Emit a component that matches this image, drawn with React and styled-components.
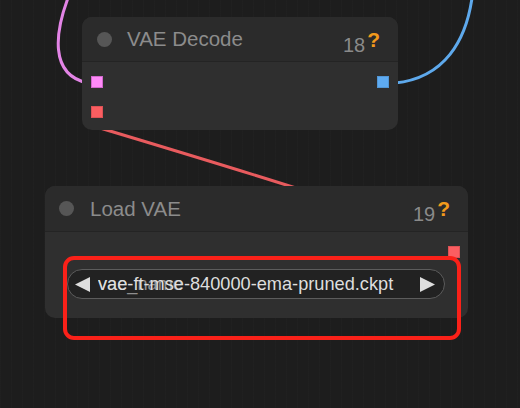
import React from "react";
import styled, { createGlobalStyle } from "styled-components";

const Global = createGlobalStyle`
  html, body { margin: 0; padding: 0; background: #1d1d1d; }
  body { font-family: "Liberation Sans", Arial, sans-serif; }
`;

const Canvas = styled.div`
  position: relative;
  width: 520px;
  height: 408px;
  overflow: hidden;
  background-color: #1d1d1d;
  background-image: repeating-linear-gradient(
    90deg,
    rgba(255, 255, 255, 0.012) 0 1px,
    transparent 1px 11px
  );
`;

const Wires = styled.svg`
  position: absolute;
  inset: 0;
  width: 520px;
  height: 408px;
`;

const Node = styled.div`
  position: absolute;
  left: ${(p) => p.$x}px;
  top: ${(p) => p.$y}px;
  width: ${(p) => p.$w}px;
  height: ${(p) => p.$h}px;
  background: #2f2f2f;
  border-radius: 10px;
  display: flex;
  flex-direction: column;
  overflow: hidden;
  box-sizing: border-box;
`;

const TitleBar = styled.div`
  height: ${(p) => p.$h}px;
  flex: none;
  background: #2b2b2b;
  border-bottom: 1px solid #242424;
  display: flex;
  align-items: center;
  padding: 0 18px 0 ${(p) => p.$pl}px;
  gap: ${(p) => p.$gap}px;
  box-sizing: border-box;
`;

const Dot = styled.span`
  width: 15px;
  height: 15px;
  border-radius: 50%;
  background: #565656;
  flex: none;
`;

const Title = styled.span`
  flex: 1;
  font-size: 20.5px;
  color: #8c8c8c;
  white-space: nowrap;
`;

const Badge = styled.span`
  display: flex;
  align-items: flex-end;
  gap: 2px;
  font-size: 20px;
  color: #8a8a8a;
  margin-top: 6px;
`;

const Help = styled.span`
  font-weight: bold;
  font-size: 21px;
  color: #f29a1c;
  padding-bottom: 5px;
`;

const Body = styled.div`
  flex: 1;
  display: flex;
  flex-direction: column;
  padding: ${(p) => p.$pad};
  gap: ${(p) => p.$gap}px;
`;

const SlotRow = styled.div`
  height: 12px;
  display: flex;
  justify-content: ${(p) => p.$justify || "space-between"};
`;

const Slot = styled.span`
  width: 12px;
  height: 12px;
  background: ${(p) => p.$color};
  box-shadow: inset 0 0 0 1px ${(p) => p.$edge || "rgba(0,0,0,0.12)"};
`;

const Combo = styled.div`
  margin: 0 15px 0 14px;
  height: 30px;
  border: 1px solid #5c5c5c;
  border-radius: 15px;
  background: #222;
  display: flex;
  align-items: center;
  padding: 0 9px 0 7px;
  gap: 8px;
  box-sizing: border-box;
`;

const Arrow = styled.svg`
  width: 15px;
  height: 15px;
  flex: none;
`;

const TextStack = styled.div`
  flex: 1;
  display: grid;
  font-size: 18.2px;
  white-space: nowrap;
  overflow: hidden;
  padding-right: 22px;
`;

const Label = styled.span`
  grid-area: 1 / 1;
  color: #8f8f8f;
  justify-self: start;
`;

const Value = styled.span`
  grid-area: 1 / 1;
  color: #dedede;
  justify-self: end;
`;

const Highlight = styled.div`
  position: absolute;
  left: 63px;
  top: 256px;
  width: 398px;
  height: 84px;
  border: 4px solid #fa2119;
  border-radius: 11px;
  box-sizing: border-box;
  pointer-events: none;
`;

export default function App() {
  return (
    <>
      <Global />
      <Canvas>
        <Wires viewBox="0 0 520 408">
          <path d="M90 125 C160 146 230 167 302 190" stroke="#e85b5e" strokeWidth="3" fill="none" />
          <path d="M68 -2 C56 30 48 75 88 83" stroke="#e384e6" strokeWidth="3" fill="none" />
          <path d="M472 -2 C466 40 445 78 395 83" stroke="#5ea9ec" strokeWidth="3" fill="none" />
        </Wires>

        <Node $x={82} $y={17} $w={316} $h={113}>
          <TitleBar $h={45} $pl={15} $gap={15}>
            <Dot />
            <Title>VAE Decode</Title>
            <Badge>
              18<Help>?</Help>
            </Badge>
          </TitleBar>
          <Body $pad="14px 9px" $gap={18}>
            <SlotRow>
              <Slot $color="#ff8af9" $edge="rgba(120,40,120,0.35)" />
              <Slot $color="#5eabf2" />
            </SlotRow>
            <SlotRow>
              <Slot $color="#fb5e61" />
            </SlotRow>
          </Body>
        </Node>

        <Node $x={45} $y={186} $w={423} $h={132}>
          <TitleBar $h={46} $pl={14} $gap={16}>
            <Dot />
            <Title>Load VAE</Title>
            <Badge>
              19<Help>?</Help>
            </Badge>
          </TitleBar>
          <Body $pad="14px 8px" $gap={11}>
            <SlotRow $justify="flex-end">
              <Slot $color="#fb5e61" />
            </SlotRow>
            <Combo>
              <Arrow viewBox="0 0 15 15">
                <polygon points="0,7.5 15,0 15,15" fill="#dedede" />
              </Arrow>
              <TextStack>
                <Label>vae_name</Label>
                <Value>vae-ft-mse-840000-ema-pruned.ckpt</Value>
              </TextStack>
              <Arrow viewBox="0 0 15 15">
                <polygon points="15,7.5 0,0 0,15" fill="#dedede" />
              </Arrow>
            </Combo>
          </Body>
        </Node>

        <Highlight />
      </Canvas>
    </>
  );
}
